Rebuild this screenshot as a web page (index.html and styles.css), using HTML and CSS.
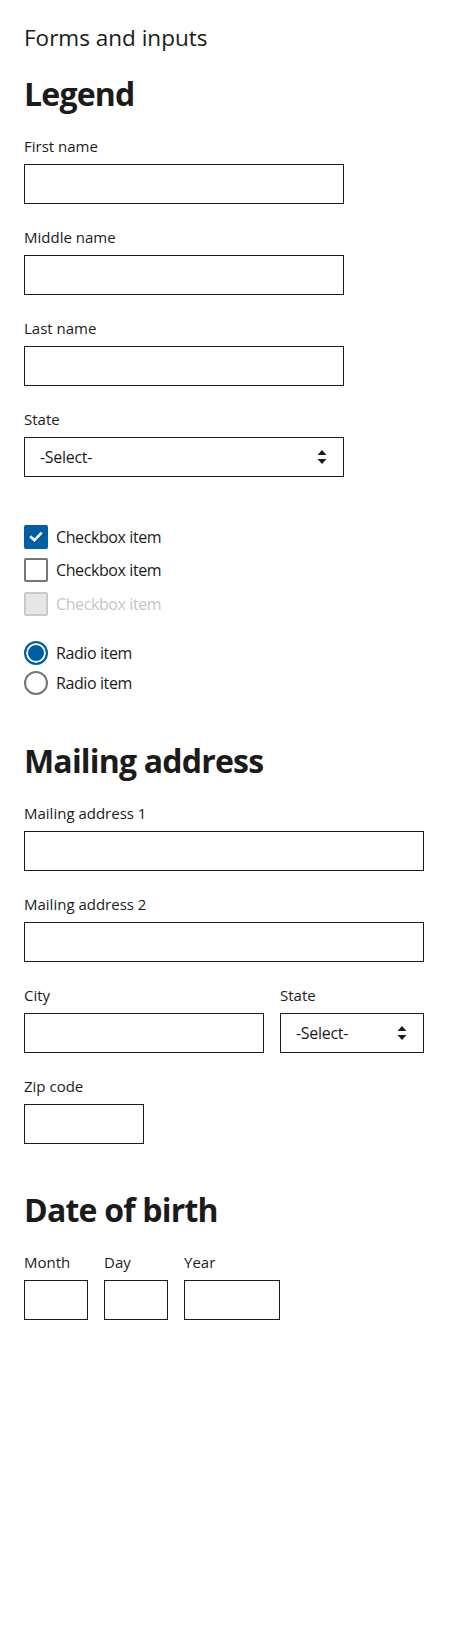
FILE: index.html
```html
<!DOCTYPE html>
<html lang="en">
<head>
<meta charset="utf-8">
<title>Forms and inputs</title>
<link rel="stylesheet" href="styles.css">
</head>
<body>
<main class="page">
  <p class="page-title">Forms and inputs</p>

  <form class="form">
    <h2 class="legend">Legend</h2>

    <div class="field">
      <label class="label" for="first">First name</label>
      <input class="input" id="first" type="text">
    </div>
    <div class="field">
      <label class="label" for="middle">Middle name</label>
      <input class="input" id="middle" type="text">
    </div>
    <div class="field">
      <label class="label" for="last">Last name</label>
      <input class="input" id="last" type="text">
    </div>
    <div class="field">
      <label class="label" for="state1">State</label>
      <div class="select-wrap">
        <select class="select" id="state1"><option>-Select-</option></select>
        <svg class="select-icon" width="10" height="14" viewBox="0 0 10 14" aria-hidden="true"><path d="M0.5 5 L5 0 L9.5 5 Z M0.5 9 L9.5 9 L5 14 Z" fill="#1b1b1b"/></svg>
      </div>
    </div>

    <div class="checks">
      <div class="check">
        <span class="box box-checked"><svg width="24" height="24" viewBox="0 0 24 24" aria-hidden="true"><path d="M7.2 12.2 L10.4 15.2 L16.8 8.6" fill="none" stroke="#fff" stroke-width="2.6" stroke-linecap="square"/></svg></span>
        <span class="check-text">Checkbox item</span>
      </div>
      <div class="check">
        <span class="box"></span>
        <span class="check-text">Checkbox item</span>
      </div>
      <div class="check disabled">
        <span class="box box-disabled"></span>
        <span class="check-text">Checkbox item</span>
      </div>
    </div>

    <div class="radios">
      <div class="check">
        <span class="radio radio-checked"></span>
        <span class="check-text">Radio item</span>
      </div>
      <div class="check">
        <span class="radio"></span>
        <span class="check-text">Radio item</span>
      </div>
    </div>

    <h2 class="legend legend-gap">Mailing address</h2>

    <div class="field">
      <label class="label" for="addr1">Mailing address 1</label>
      <input class="input input-wide" id="addr1" type="text">
    </div>
    <div class="field">
      <label class="label" for="addr2">Mailing address 2</label>
      <input class="input input-wide" id="addr2" type="text">
    </div>
    <div class="row">
      <div class="field">
        <label class="label" for="city">City</label>
        <input class="input input-city" id="city" type="text">
      </div>
      <div class="field">
        <label class="label" for="state2">State</label>
        <div class="select-wrap">
          <select class="select select-small" id="state2"><option>-Select-</option></select>
          <svg class="select-icon" width="10" height="14" viewBox="0 0 10 14" aria-hidden="true"><path d="M0.5 5 L5 0 L9.5 5 Z M0.5 9 L9.5 9 L5 14 Z" fill="#1b1b1b"/></svg>
        </div>
      </div>
    </div>
    <div class="field">
      <label class="label" for="zip">Zip code</label>
      <input class="input input-zip" id="zip" type="text">
    </div>

    <h2 class="legend legend-gap">Date of birth</h2>

    <div class="row">
      <div class="field">
        <label class="label" for="month">Month</label>
        <input class="input input-md" id="month" type="text">
      </div>
      <div class="field">
        <label class="label" for="day">Day</label>
        <input class="input input-md" id="day" type="text">
      </div>
      <div class="field">
        <label class="label" for="year">Year</label>
        <input class="input input-year" id="year" type="text">
      </div>
    </div>
  </form>
</main>
</body>
</html>
```

FILE: styles.css
```css
* { box-sizing: border-box; }

html, body {
  margin: 0;
  padding: 0;
  background: #fff;
}

body {
  font-family: "Open Sans", "Noto Sans", "Liberation Sans", sans-serif;
  color: #1b1b1b;
  height: 1625px;
}

.page {
  padding: 24px 24px 0 24px;
}

.page-title {
  margin: 0;
  font-size: 22.5px;
  line-height: 28px;
  font-weight: 400;
}

.form {
  display: flex;
  flex-direction: column;
  align-items: flex-start;
}

.legend {
  margin: 22px 0 0 0;
  font-size: 32px;
  line-height: 40px;
  font-weight: 700;
  letter-spacing: -0.8px;
}

.legend-gap {
  margin-top: 46px;
}

.field {
  display: flex;
  flex-direction: column;
  margin-top: 23px;
}

.legend + .field,
.legend + .row > .field {
  margin-top: 22px;
}

.label {
  font-size: 15px;
  line-height: 20px;
  margin-bottom: 8px;
}

.input,
.select {
  display: block;
  height: 40px;
  width: 320px;
  margin: 0;
  border: 1px solid #1b1b1b;
  border-radius: 0;
  background: #fff;
  font-family: inherit;
  font-size: 16px;
  color: #1b1b1b;
  padding: 0 8px;
}

.input-wide { width: 400px; }
.input-city { width: 240px; }
.input-zip { width: 120px; }
.input-md { width: 64px; }
.input-year { width: 96px; }

.select-wrap {
  position: relative;
}

.select {
  appearance: none;
  -webkit-appearance: none;
  padding: 0 0 0 15px;
  line-height: 24px;
  letter-spacing: -0.3px;
}

.select-small { width: 144px; }

.select-icon {
  position: absolute;
  right: 17px;
  top: 13px;
  pointer-events: none;
}

.row {
  display: flex;
  gap: 16px;
}

.checks {
  display: flex;
  flex-direction: column;
  gap: 9.33px;
  margin-top: 48px;
}

.radios {
  display: flex;
  flex-direction: column;
  gap: 6px;
  margin-top: 25px;
}

.check {
  display: flex;
  align-items: center;
  gap: 8px;
  font-size: 16px;
  line-height: 24px;
}

.check-text {
  letter-spacing: -0.4px;
}

.box {
  display: block;
  width: 24px;
  height: 24px;
  border: 2px solid #757575;
  border-radius: 2px;
  background: #fff;
  position: relative;
}

.box-checked {
  border-color: #005ea2;
  background: #005ea2;
}

.box-checked svg {
  position: absolute;
  left: -2px;
  top: -2px;
}

.box-disabled {
  border-color: #c9c9c9;
  background: #e6e6e6;
}

.disabled .check-text {
  color: #c6c6c6;
}

.radio {
  display: block;
  width: 24px;
  height: 24px;
  border: 2px solid #757575;
  border-radius: 50%;
  background: #fff;
}

.radio-checked {
  border-color: #005ea2;
  background: #005ea2;
  box-shadow: inset 0 0 0 2px #fff;
}
```
